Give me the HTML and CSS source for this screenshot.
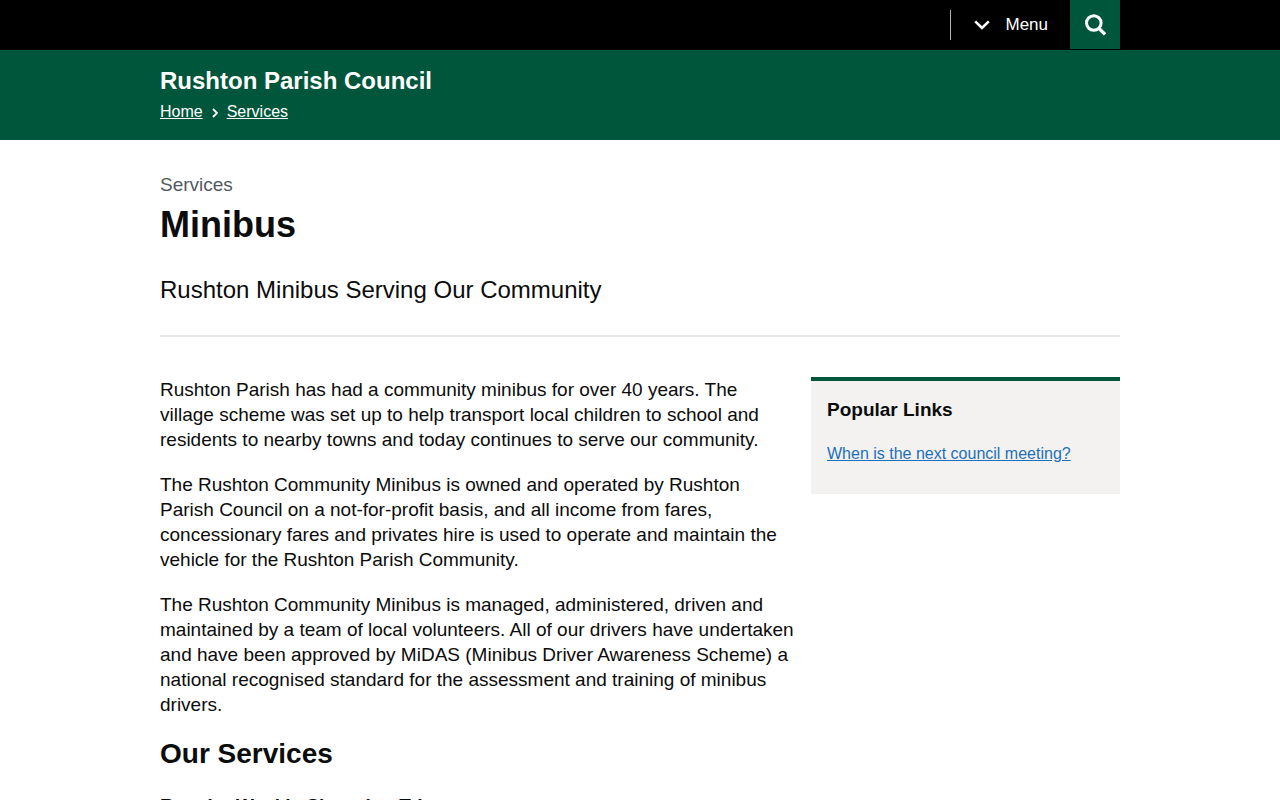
FILE: index.html
```
<!DOCTYPE html>
<html lang="en">
<head>
    <meta charset="UTF-8">
    <meta name="viewport" content="width=device-width, initial-scale=1.0">
    <title>Minibus - Rushton Parish Council</title>
    <link rel="stylesheet" href="styles.css">
</head>
<body>

    <!-- Top bar -->
    <div class="top-bar">
        <div class="container top-bar-inner">
            <button type="button" class="menu-btn">
                <svg class="chevron" width="16" height="10" viewBox="0 0 16 10" aria-hidden="true">
                    <path d="M1.2 1.4 8 8l6.8-6.6" fill="none" stroke="currentColor" stroke-width="2.6"/>
                </svg>
                <span>Menu</span>
            </button>
            <button type="button" class="search-btn" aria-label="Search">
                <svg width="22" height="22" viewBox="0 0 22 22" aria-hidden="true">
                    <circle cx="9.8" cy="9" r="7.3" fill="none" stroke="currentColor" stroke-width="3"/>
                    <path d="M14.7 14.1 21.1 20.4" fill="none" stroke="currentColor" stroke-width="3.4"/>
                </svg>
            </button>
        </div>
    </div>

    <!-- Site header -->
    <header class="site-header">
        <div class="container">
            <div class="site-name">Rushton Parish Council</div>
            <nav class="breadcrumb">
                <a href="#">Home</a>
                <svg width="6" height="10" viewBox="0 0 6 10" aria-hidden="true">
                    <path d="M1 1 5 5 1 9" fill="none" stroke="currentColor" stroke-width="1.8"/>
                </svg>
                <a href="#">Services</a>
            </nav>
        </div>
    </header>

    <main class="container">
        <!-- Page title -->
        <div class="page-header">
            <span class="caption">Services</span>
            <h1>Minibus</h1>
            <p class="lead">Rushton Minibus Serving Our Community</p>
        </div>

        <div class="columns">
            <div class="content">
                <p>Rushton Parish has had a community minibus for over 40 years. The village scheme was set up to help transport local children to school and residents to nearby towns and today continues to serve our community.</p>
                <p>The Rushton Community Minibus is owned and operated by Rushton Parish Council on a not-for-profit basis, and all income from fares, concessionary fares and privates hire is used to operate and maintain the vehicle for the Rushton Parish Community.</p>
                <p>The Rushton Community Minibus is managed, administered, driven and maintained by a team of local volunteers. All of our drivers have undertaken and have been approved by MiDAS (Minibus Driver Awareness Scheme) a national recognised standard for the assessment and training of minibus drivers.</p>
                <h2>Our Services</h2>
                <h3>Regular Weekly Shopping Trips</h3>
            </div>

            <aside class="sidebar">
                <h3>Popular Links</h3>
                <a href="#">When is the next council meeting?</a>
            </aside>
        </div>
    </main>

</body>
</html>
```
FILE: styles.css
```
/* General Reset */
* {
    margin: 0;
    padding: 0;
    box-sizing: border-box;
}

body {
    font-family: "Liberation Sans", Arial, sans-serif;
    font-size: 19px;
    line-height: 25px;
    color: #0b0c0c;
    background-color: #fff;
    height: 100vh;
    overflow: hidden;
}

.container {
    width: 960px;
    margin: 0 auto;
}

/* Top Bar */
.top-bar {
    height: 50px;
    background-color: #000;
}

.top-bar-inner {
    display: flex;
    justify-content: flex-end;
    align-items: flex-start;
}

button {
    border: none;
    background: none;
    color: #fff;
    font-family: inherit;
    cursor: pointer;
}

.menu-btn {
    display: flex;
    align-items: center;
    gap: 15px;
    height: 30px;
    margin-top: 10px;
    padding: 0 22px 0 23px;
    border-left: 1px solid #b1b4b6;
    font-size: 17px;
}

.chevron {
    margin-bottom: 1px;
}

.search-btn {
    display: flex;
    justify-content: center;
    align-items: center;
    width: 50px;
    height: 49px;
    background-color: #00563b;
}

/* Site Header */
.site-header {
    height: 90px;
    padding-top: 16px;
    background-color: #00563b;
    color: #fff;
}

.site-name {
    font-size: 24px;
    font-weight: bold;
    line-height: 30px;
}

.breadcrumb {
    display: flex;
    align-items: center;
    gap: 9px;
    margin-top: 6px;
    font-size: 16px;
    line-height: 20px;
}

.breadcrumb a {
    color: #fff;
}

.breadcrumb svg {
    margin-top: 2px;
}

/* Page Title */
.page-header {
    padding: 32px 0 30px;
    border-bottom: 2px solid #e5e5ea;
}

.caption {
    display: block;
    color: #505a5f;
}

h1 {
    font-size: 36px;
    line-height: 40px;
    margin: 8px 0 30px;
}

.lead {
    font-size: 24px;
    line-height: 30px;
}

/* Main Columns */
.columns {
    display: flex;
    justify-content: space-between;
    align-items: flex-start;
    margin-top: 40px;
}

.content {
    width: 635px;
}

.content p {
    margin-bottom: 20px;
}

h2 {
    font-size: 28px;
    line-height: 34px;
    margin-bottom: 22px;
}

h3 {
    font-size: 19px;
    line-height: 25px;
}

/* Sidebar */
.sidebar {
    width: 309px;
    height: 117px;
    padding: 16px;
    border-top: 4px solid #00563b;
    background-color: #f3f2f1;
    font-size: 16px;
}

.sidebar h3 {
    margin-bottom: 19px;
}

.sidebar a {
    color: #1d70b8;
}
```
